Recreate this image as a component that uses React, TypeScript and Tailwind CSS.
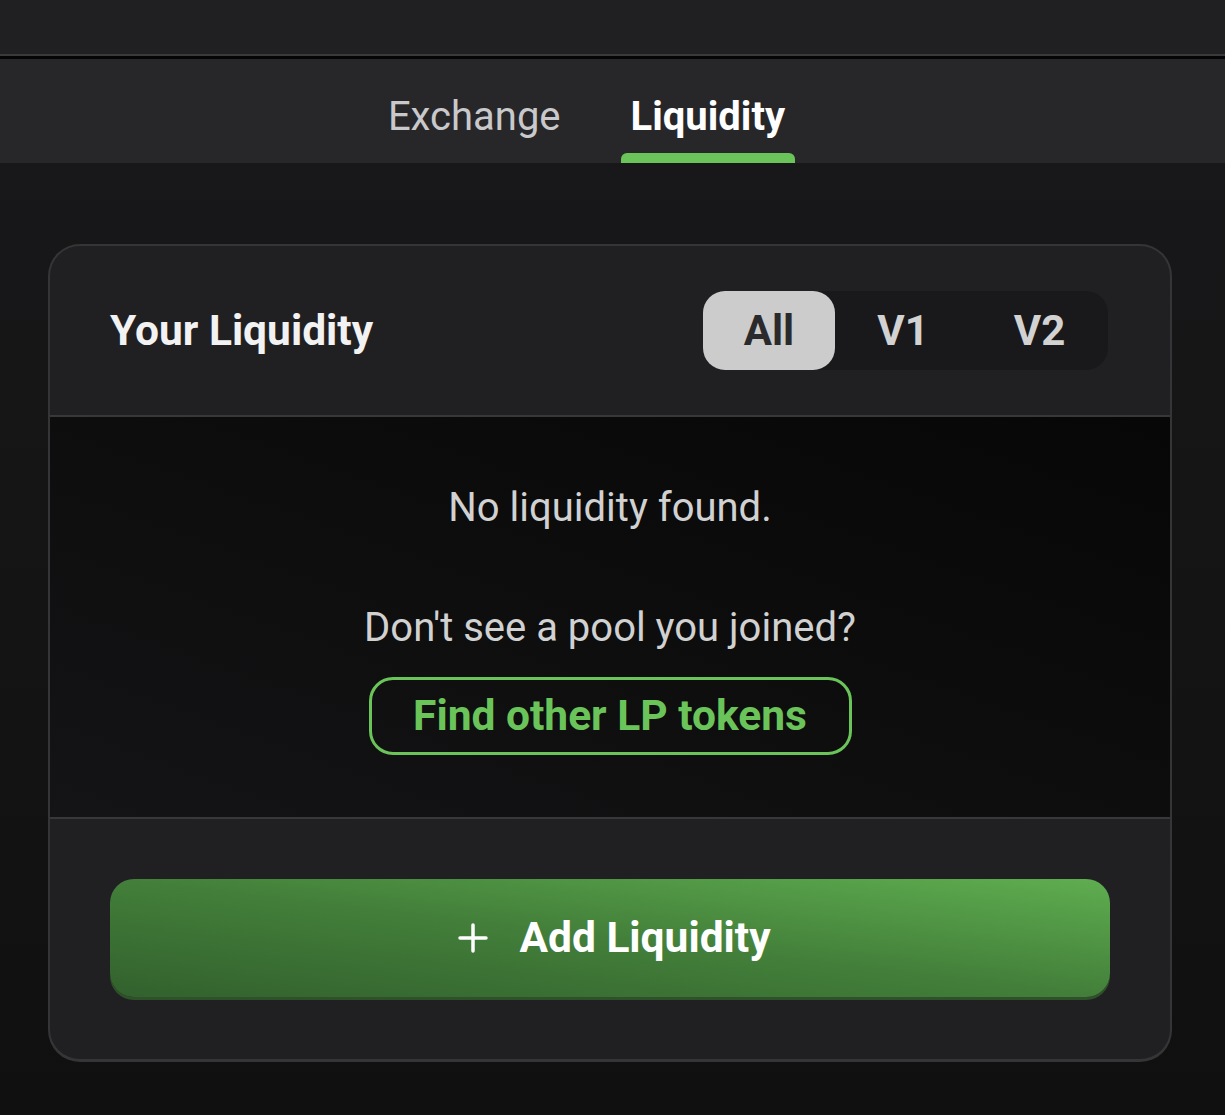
export default function App() {
  return (
    <div className="min-h-[1115px] w-full bg-gradient-to-b from-[#19191b] to-[#101010] font-['Roboto',sans-serif]">
      {/* top bar */}
      <div className="h-[54px] bg-[#202022]" />
      <div className="h-[2px] bg-[#3a3a3c]" />
      <div className="h-[3px] bg-[#050505]" />

      {/* tabs */}
      <div className="flex h-[104px] items-end justify-center bg-[#27272a] pr-[52px]">
        <div className="flex h-full items-center px-[10px] pt-[12px] text-[40px] leading-none text-[#c9c9cb]">
          Exchange
        </div>
        <div className="ml-[50px] flex h-full flex-col items-center">
          <div className="flex flex-1 items-center px-[10px] pt-[22px] text-[40px] font-bold leading-none text-white">
            Liquidity
          </div>
          <div className="h-[10px] w-full rounded-t-[6px] bg-[#6ac45a]" />
        </div>
      </div>

      {/* card */}
      <div className="pl-[48px] pt-[81px]">
        <div className="w-[1124px] overflow-hidden rounded-[32px] border-2 border-b-[3px] border-[#353537] bg-[#202022]">
          <div className="flex h-[171px] items-center justify-between border-b-2 border-[#38383a] px-[60px]">
            <div className="text-[42.5px] font-bold text-[#f2f2f2]">Your Liquidity</div>
            <div className="mr-[2px] flex h-[79px] rounded-[22px] bg-[#19191b] text-[42px] font-bold">
              <div className="flex w-[132px] items-center justify-center rounded-[22px] bg-[#cccccc] text-[#2a2a2c]">
                All
              </div>
              <div className="flex w-[136px] items-center justify-center text-[#d2d2d2]">V1</div>
              <div className="flex w-[137px] items-center justify-center text-[#d2d2d2]">V2</div>
            </div>
          </div>

          <div className="flex h-[402px] flex-col items-center border-b-2 border-[#38383a] bg-gradient-to-tr from-[#141416] to-[#070707] pt-[61px] text-[40px] leading-[60px] text-[#d1d1d1]">
            <div>No liquidity found.</div>
            <div className="mt-[60px]">Don't see a pool you joined?</div>
            <button className="mt-[19px] flex h-[78px] w-[483px] items-center justify-center rounded-[24px] border-[3px] border-[#6ac45a] text-[42.5px] font-bold text-[#6ac45a]">
              Find other LP tokens
            </button>
          </div>

          <div className="px-[60px] pb-[62px] pt-[60px]">
            <button className="flex h-[118px] w-full items-center justify-center gap-[31px] rounded-[24px] bg-gradient-to-tr from-[#32612d] via-[#437f3a] to-[#5fae50] pl-[9px] text-[42.5px] font-bold text-white shadow-[0_3px_0_#2f5129]">
              <svg width="30" height="30" viewBox="0 0 30 30" fill="none" stroke="white" strokeWidth="3.5" strokeLinecap="round">
                <path d="M15 2v26M2 15h26" />
              </svg>
              <span>Add Liquidity</span>
            </button>
          </div>
        </div>
      </div>
    </div>
  );
}
